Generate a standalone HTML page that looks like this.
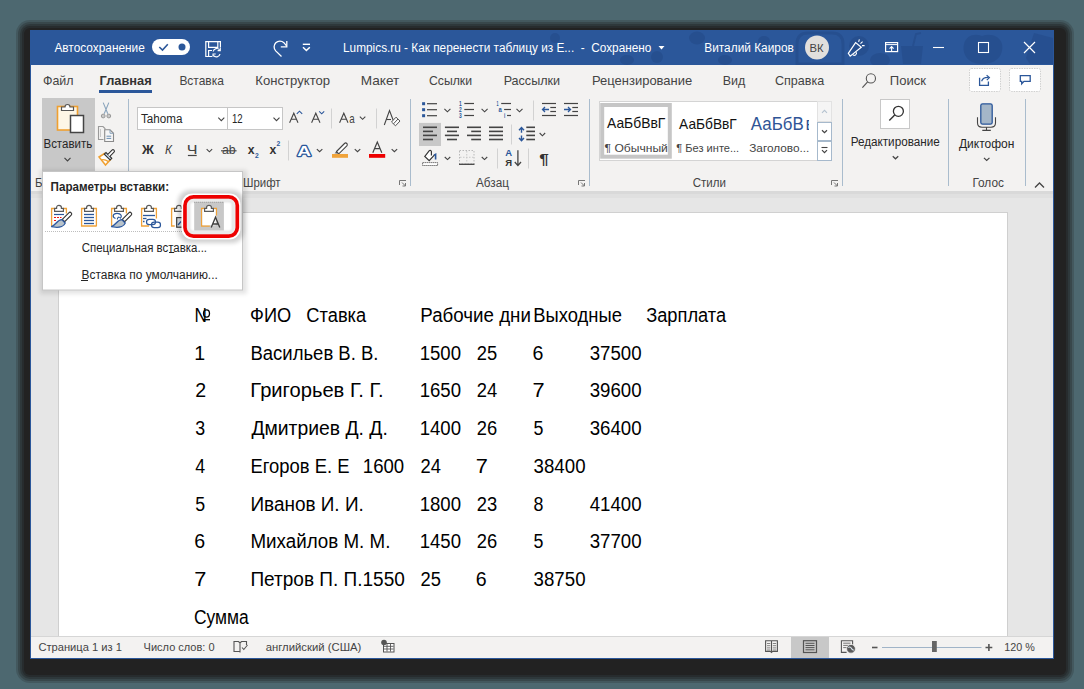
<!DOCTYPE html>
<html><head><meta charset="utf-8"><style>
html,body{margin:0;padding:0;width:1084px;height:689px;overflow:hidden;background:#4d6870}
svg{display:block;position:absolute;left:0;top:0}
text{font-family:"Liberation Sans", sans-serif;white-space:pre}
</style></head><body>
<svg width="1084" height="689" viewBox="0 0 1084 689">
<defs>
<filter id="blur4" x="-10%" y="-10%" width="120%" height="120%"><feGaussianBlur stdDeviation="4"/></filter>
<filter id="blur2" x="-10%" y="-10%" width="120%" height="120%"><feGaussianBlur stdDeviation="2"/></filter>
<filter id="blur1" x="-30%" y="-30%" width="160%" height="160%"><feGaussianBlur stdDeviation="1.2"/></filter>
</defs>
<g fill="#1e1e1e">
<rect x="16" y="20" width="1058" height="663" rx="14" opacity="0.22"/>
<rect x="18" y="22" width="1054" height="659" rx="12" opacity="0.28"/>
<rect x="20" y="24" width="1050" height="655" rx="10" opacity="0.34"/>
<rect x="22" y="26" width="1046" height="651" rx="8" opacity="0.45"/>
<rect x="24" y="28" width="1042" height="647" rx="6" fill="#222222"/>
</g>
<rect x="30" y="30" width="1024" height="629" fill="#2b579a" />
<rect x="31" y="65" width="1022" height="126" fill="#f3f2f1" />
<rect x="31" y="191" width="1022" height="446" fill="#e6e6e6" />
<rect x="31" y="191" width="1022" height="3" fill="#d9d9d9" />
<rect x="31" y="194" width="1022" height="4" fill="#e0e0e0" />
<rect x="58" y="212" width="950" height="425" fill="#ffffff" />
<line x1="58.5" y1="212" x2="58.5" y2="637" stroke="#cfcfcf" stroke-width="1" />
<line x1="1007.5" y1="212" x2="1007.5" y2="637" stroke="#cfcfcf" stroke-width="1" />
<line x1="58" y1="212.5" x2="1008" y2="212.5" stroke="#d0d0d0" stroke-width="1" />
<rect x="31" y="637" width="1022" height="21" fill="#f3f2f1" />
<line x1="31" y1="636.5" x2="1053" y2="636.5" stroke="#d6d6d6" stroke-width="1" />
<clipPath id="tb"><rect x="31" y="30" width="1022" height="35"/></clipPath>
<g fill="#254c8b" opacity="0.7" clip-path="url(#tb)">
<ellipse cx="697" cy="38" rx="8" ry="6.5"/>
<ellipse cx="764" cy="41" rx="6" ry="5"/>
<ellipse cx="725" cy="60" rx="7" ry="5"/>
<ellipse cx="657" cy="57" rx="6" ry="6"/>
<ellipse cx="555" cy="38" rx="5" ry="5"/>
<ellipse cx="627" cy="60" rx="7" ry="5"/>
<path d="M797,64 V44 Q797,33 808,33 H832 Q843,33 843,44 V64 Z" fill="none" stroke="#254c8b" stroke-width="3"/>
<path d="M903,64 L901,46 H923 L921,64 Z"/>
<path d="M913,46 L916,34 L921,33" fill="none" stroke="#254c8b" stroke-width="2"/>
<ellipse cx="880" cy="60" rx="10" ry="7"/>
<circle cx="859" cy="46" r="10"/>
<path d="M982,64 C966,64 962,52 964,44 C966,36 974,33 982,36 C990,33 1000,36 1002,44 C1004,54 998,64 982,64 Z"/>
<path d="M1026,58 L1034,33 L1053,38 V64 H1030 Z"/>
</g>
<text x="54.40" y="52" font-size="12.5" font-weight="400" fill="#ffffff" textLength="90.45" lengthAdjust="spacingAndGlyphs" >Автосохранение</text>
<rect x="152" y="39" width="38" height="16" rx="8" fill="#ffffff"/>
<path d="M159.3,47 L162.5,50 L167.8,44.3" stroke="#2b579a" fill="none" stroke-width="1.6" />
<circle cx="182" cy="46.9" r="3.5" fill="#2b579a"/>
<path d="M212,56.5 H205.8 V41.6 H220.4 V47.5 M208.6,41.6 V47.3 H217.8 V41.6 M208.6,56.5 V50.5 H212" stroke="#fff" fill="none" stroke-width="1.2" />
<path d="M213.2,51.5 A3.6,3.6 0 0 1 219.8,50.2 M220,54 A3.6,3.6 0 0 1 213.4,55.2" stroke="#fff" fill="none" stroke-width="1.2" />
<path d="M220.3,47.8 V50.6 H217.6 M213,56.8 V54 H215.7" stroke="#fff" fill="none" stroke-width="1.1" />
<path d="M281.5,56.5 L275.7,50.9 A5.8,5.8 0 0 1 283.9,42.7 L286.5,45.8" stroke="#fff" fill="none" stroke-width="1.3" />
<path d="M286.8,41 V46.8 H280.8" stroke="#fff" fill="none" stroke-width="1.3" />
<line x1="302.8" y1="44.3" x2="310" y2="44.3" stroke="#fff" stroke-width="1.4" />
<path d="M303,47.3 L306.4,50.5 L309.8,47.3" stroke="#fff" fill="none" stroke-width="1.5" />
<text x="343.05" y="52" font-size="12.5" font-weight="400" fill="#ffffff" textLength="308.40" lengthAdjust="spacingAndGlyphs" >Lumpics.ru - Как перенести таблицу из E...  -  Сохранено</text>
<path d="M658.5,46 L664.5,46 L661.5,49.5 Z" stroke="none" fill="#fff" stroke-width="1" />
<text x="704.25" y="52" font-size="12.5" font-weight="400" fill="#ffffff" textLength="89.61" lengthAdjust="spacingAndGlyphs" >Виталий Каиров</text>
<circle cx="817" cy="47.5" r="12" fill="#e1dfdd"/>
<text x="809.50" y="51.5" font-size="10.5" font-weight="400" fill="#444444" textLength="14.05" lengthAdjust="spacingAndGlyphs" >ВК</text>
<path d="M848.3,53.3 L855.6,42.6 L861.3,47.2 L850.2,56.2 Z" stroke="#fff" fill="none" stroke-width="1.2" />
<path d="M853,54.6 A1.8,1.8 0 0 0 856,52.2" stroke="#fff" fill="none" stroke-width="1.1" />
<path d="M858.6,41.8 L859.4,39.4 M860.5,43.6 L862.6,41.6 M862,45.6 H864.6" stroke="#fff" fill="none" stroke-width="1.1" />
<rect x="885.6" y="42.6" width="12" height="9" fill="none" stroke="#fff" stroke-width="1.2"/>
<line x1="885.6" y1="44.6" x2="897.6" y2="44.6" stroke="#fff" stroke-width="1" />
<path d="M891.6,51.2 V46.6 M889.6,48.6 L891.6,46.6 L893.6,48.6" stroke="#fff" fill="none" stroke-width="1.1" />
<line x1="933" y1="47.5" x2="944" y2="47.5" stroke="#fff" stroke-width="1.1" />
<rect x="978.5" y="42.5" width="10" height="10" fill="none" stroke="#fff" stroke-width="1.1"/>
<path d="M1024,42 L1035,53 M1035,42 L1024,53" stroke="#fff" fill="none" stroke-width="1.2" />
<text x="43.00" y="85" font-size="13" font-weight="400" fill="#444444" textLength="30.56" lengthAdjust="spacingAndGlyphs" >Файл</text>
<text x="99.60" y="85" font-size="13.6" font-weight="700" fill="#333333" textLength="52.08" lengthAdjust="spacingAndGlyphs" >Главная</text>
<rect x="99" y="90" width="53" height="3" fill="#2b579a" />
<text x="179.38" y="85" font-size="13" font-weight="400" fill="#444444" textLength="44.51" lengthAdjust="spacingAndGlyphs" >Вставка</text>
<text x="255.39" y="85" font-size="13" font-weight="400" fill="#444444" textLength="74.74" lengthAdjust="spacingAndGlyphs" >Конструктор</text>
<text x="360.75" y="85" font-size="13" font-weight="400" fill="#444444" textLength="38.60" lengthAdjust="spacingAndGlyphs" >Макет</text>
<text x="429.00" y="85" font-size="13" font-weight="400" fill="#444444" textLength="43.05" lengthAdjust="spacingAndGlyphs" >Ссылки</text>
<text x="503.63" y="85" font-size="13" font-weight="400" fill="#444444" textLength="56.42" lengthAdjust="spacingAndGlyphs" >Рассылки</text>
<text x="592.00" y="85" font-size="13" font-weight="400" fill="#444444" textLength="100.23" lengthAdjust="spacingAndGlyphs" >Рецензирование</text>
<text x="722.64" y="85" font-size="13" font-weight="400" fill="#444444" textLength="22.56" lengthAdjust="spacingAndGlyphs" >Вид</text>
<text x="775.00" y="85" font-size="13" font-weight="400" fill="#444444" textLength="49.26" lengthAdjust="spacingAndGlyphs" >Справка</text>
<circle cx="870.9" cy="78.4" r="4.6" fill="none" stroke="#555" stroke-width="1.1"/>
<line x1="867.6" y1="81.8" x2="862.4" y2="87.6" stroke="#555" stroke-width="1.2" />
<text x="889.80" y="85" font-size="13" font-weight="400" fill="#444444" textLength="36.19" lengthAdjust="spacingAndGlyphs" >Поиск</text>
<rect x="969.5" y="68.5" width="31" height="23" rx="2" fill="#ffffff" stroke="#cfcfcf" stroke-width="1" stroke-dasharray="1.5,1"/>
<rect x="1009.5" y="68.5" width="31" height="23" rx="2" fill="#ffffff" stroke="#cfcfcf" stroke-width="1" stroke-dasharray="1.5,1"/>
<path d="M979.6,77.8 V85.3 H988.4 V81.5" stroke="#2b579a" fill="none" stroke-width="1.3" />
<path d="M981.6,81.2 Q983,77.2 988.2,77.4 M986.6,75.2 L989.4,77.6 L986.8,80.2" stroke="#2b579a" fill="none" stroke-width="1.2" />
<path d="M1020.3,75.6 H1030.2 V81.3 H1024 L1021.7,83.8 V81.3 H1020.3 Z" stroke="#2b579a" fill="none" stroke-width="1.3" />
<line x1="128.5" y1="99" x2="128.5" y2="186" stroke="#a9bccd" stroke-width="1" />
<line x1="410.5" y1="99" x2="410.5" y2="186" stroke="#a9bccd" stroke-width="1" />
<line x1="589.5" y1="99" x2="589.5" y2="186" stroke="#a9bccd" stroke-width="1" />
<line x1="842.5" y1="99" x2="842.5" y2="186" stroke="#a9bccd" stroke-width="1" />
<line x1="948.5" y1="99" x2="948.5" y2="186" stroke="#a9bccd" stroke-width="1" />
<line x1="1025.5" y1="99" x2="1025.5" y2="186" stroke="#a9bccd" stroke-width="1" />
<text x="243.00" y="187" font-size="12" font-weight="400" fill="#444444" textLength="37.52" lengthAdjust="spacingAndGlyphs" >Шрифт</text>
<text x="476.00" y="187" font-size="12" font-weight="400" fill="#444444" textLength="32.88" lengthAdjust="spacingAndGlyphs" >Абзац</text>
<text x="692.70" y="187" font-size="12" font-weight="400" fill="#444444" textLength="33.17" lengthAdjust="spacingAndGlyphs" >Стили</text>
<text x="972.40" y="187" font-size="12" font-weight="400" fill="#444444" textLength="31.50" lengthAdjust="spacingAndGlyphs" >Голос</text>
<path d="M399.5,185 V180.5 H406 " stroke="#777" fill="none" stroke-width="1" />
<path d="M402,182.5 L405.5,186 M405.5,183 V186 H402.5" stroke="#777" fill="none" stroke-width="1" />
<path d="M578.5,185 V180.5 H585 " stroke="#777" fill="none" stroke-width="1" />
<path d="M581,182.5 L584.5,186 M584.5,183 V186 H581.5" stroke="#777" fill="none" stroke-width="1" />
<path d="M831.5,185 V180.5 H838 " stroke="#777" fill="none" stroke-width="1" />
<path d="M834,182.5 L837.5,186 M837.5,183 V186 H834.5" stroke="#777" fill="none" stroke-width="1" />
<path d="M1035,187.5 L1039.5,183 L1044,187.5" stroke="#444" fill="none" stroke-width="1.3" />
<text x="194.43" y="322" font-size="19.6" font-weight="400" fill="#000000" textLength="12.38" lengthAdjust="spacingAndGlyphs" >N</text>
<ellipse cx="206.5" cy="313.5" rx="3" ry="3.6" fill="none" stroke="#000" stroke-width="1.3"/>
<line x1="203" y1="319.7" x2="210" y2="319.7" stroke="#000" stroke-width="1.3" />
<text x="250.07" y="322" font-size="19.6" font-weight="400" fill="#000000" textLength="41.15" lengthAdjust="spacingAndGlyphs" >ФИО</text>
<text x="306.37" y="322" font-size="19.6" font-weight="400" fill="#000000" textLength="59.84" lengthAdjust="spacingAndGlyphs" >Ставка</text>
<text x="420.34" y="322" font-size="19.6" font-weight="400" fill="#000000" textLength="110.56" lengthAdjust="spacingAndGlyphs" >Рабочие дни</text>
<text x="533.36" y="322" font-size="19.6" font-weight="400" fill="#000000" textLength="88.54" lengthAdjust="spacingAndGlyphs" >Выходные</text>
<text x="646.20" y="322" font-size="19.6" font-weight="400" fill="#000000" textLength="79.90" lengthAdjust="spacingAndGlyphs" >Зарплата</text>
<text x="194.30" y="359.7" font-size="19.6" font-weight="400" fill="#000000" textLength="10.90" lengthAdjust="spacingAndGlyphs" >1</text>
<text x="250.46" y="359.7" font-size="19.6" font-weight="400" fill="#000000" textLength="128.01" lengthAdjust="spacingAndGlyphs" >Васильев В. В.</text>
<text x="419.65" y="359.7" font-size="19.6" font-weight="400" fill="#000000" textLength="41.37" lengthAdjust="spacingAndGlyphs" >1500</text>
<text x="476.80" y="359.7" font-size="19.6" font-weight="400" fill="#000000" textLength="20.41" lengthAdjust="spacingAndGlyphs" >25</text>
<text x="532.60" y="359.7" font-size="19.6" font-weight="400" fill="#000000" textLength="10.90" lengthAdjust="spacingAndGlyphs" >6</text>
<text x="589.70" y="359.7" font-size="19.6" font-weight="400" fill="#000000" textLength="51.93" lengthAdjust="spacingAndGlyphs" >37500</text>
<text x="195.30" y="397.4" font-size="19.6" font-weight="400" fill="#000000" textLength="10.90" lengthAdjust="spacingAndGlyphs" >2</text>
<text x="250.37" y="397.4" font-size="19.6" font-weight="400" fill="#000000" textLength="133.21" lengthAdjust="spacingAndGlyphs" >Григорьев Г. Г.</text>
<text x="419.65" y="397.4" font-size="19.6" font-weight="400" fill="#000000" textLength="41.37" lengthAdjust="spacingAndGlyphs" >1650</text>
<text x="476.80" y="397.4" font-size="19.6" font-weight="400" fill="#000000" textLength="20.41" lengthAdjust="spacingAndGlyphs" >24</text>
<text x="532.49" y="397.4" font-size="19.6" font-weight="400" fill="#000000" textLength="12.11" lengthAdjust="spacingAndGlyphs" >7</text>
<text x="589.70" y="397.4" font-size="19.6" font-weight="400" fill="#000000" textLength="51.93" lengthAdjust="spacingAndGlyphs" >39600</text>
<text x="195.30" y="435.1" font-size="19.6" font-weight="400" fill="#000000" textLength="9.91" lengthAdjust="spacingAndGlyphs" >3</text>
<text x="251.40" y="435.1" font-size="19.6" font-weight="400" fill="#000000" textLength="136.43" lengthAdjust="spacingAndGlyphs" >Дмитриев Д. Д.</text>
<text x="419.65" y="435.1" font-size="19.6" font-weight="400" fill="#000000" textLength="41.37" lengthAdjust="spacingAndGlyphs" >1400</text>
<text x="476.80" y="435.1" font-size="19.6" font-weight="400" fill="#000000" textLength="20.41" lengthAdjust="spacingAndGlyphs" >26</text>
<text x="533.60" y="435.1" font-size="19.6" font-weight="400" fill="#000000" textLength="9.91" lengthAdjust="spacingAndGlyphs" >5</text>
<text x="589.70" y="435.1" font-size="19.6" font-weight="400" fill="#000000" textLength="51.93" lengthAdjust="spacingAndGlyphs" >36400</text>
<text x="195.30" y="472.8" font-size="19.6" font-weight="400" fill="#000000" textLength="9.91" lengthAdjust="spacingAndGlyphs" >4</text>
<text x="250.46" y="472.8" font-size="19.6" font-weight="400" fill="#000000" textLength="99.00" lengthAdjust="spacingAndGlyphs" >Егоров Е. Е</text>
<text x="362.85" y="472.8" font-size="19.6" font-weight="400" fill="#000000" textLength="41.37" lengthAdjust="spacingAndGlyphs" >1600</text>
<text x="420.60" y="472.8" font-size="19.6" font-weight="400" fill="#000000" textLength="20.41" lengthAdjust="spacingAndGlyphs" >24</text>
<text x="475.69" y="472.8" font-size="19.6" font-weight="400" fill="#000000" textLength="12.11" lengthAdjust="spacingAndGlyphs" >7</text>
<text x="533.60" y="472.8" font-size="19.6" font-weight="400" fill="#000000" textLength="51.93" lengthAdjust="spacingAndGlyphs" >38400</text>
<text x="195.30" y="510.5" font-size="19.6" font-weight="400" fill="#000000" textLength="9.91" lengthAdjust="spacingAndGlyphs" >5</text>
<text x="250.43" y="510.5" font-size="19.6" font-weight="400" fill="#000000" textLength="113.36" lengthAdjust="spacingAndGlyphs" >Иванов И. И.</text>
<text x="419.65" y="510.5" font-size="19.6" font-weight="400" fill="#000000" textLength="41.37" lengthAdjust="spacingAndGlyphs" >1800</text>
<text x="476.80" y="510.5" font-size="19.6" font-weight="400" fill="#000000" textLength="20.41" lengthAdjust="spacingAndGlyphs" >23</text>
<text x="533.60" y="510.5" font-size="19.6" font-weight="400" fill="#000000" textLength="9.91" lengthAdjust="spacingAndGlyphs" >8</text>
<text x="589.70" y="510.5" font-size="19.6" font-weight="400" fill="#000000" textLength="51.93" lengthAdjust="spacingAndGlyphs" >41400</text>
<text x="194.30" y="548.2" font-size="19.6" font-weight="400" fill="#000000" textLength="10.90" lengthAdjust="spacingAndGlyphs" >6</text>
<text x="250.44" y="548.2" font-size="19.6" font-weight="400" fill="#000000" textLength="139.94" lengthAdjust="spacingAndGlyphs" >Михайлов М. М.</text>
<text x="419.65" y="548.2" font-size="19.6" font-weight="400" fill="#000000" textLength="41.37" lengthAdjust="spacingAndGlyphs" >1450</text>
<text x="476.80" y="548.2" font-size="19.6" font-weight="400" fill="#000000" textLength="20.41" lengthAdjust="spacingAndGlyphs" >26</text>
<text x="533.60" y="548.2" font-size="19.6" font-weight="400" fill="#000000" textLength="9.91" lengthAdjust="spacingAndGlyphs" >5</text>
<text x="589.70" y="548.2" font-size="19.6" font-weight="400" fill="#000000" textLength="51.93" lengthAdjust="spacingAndGlyphs" >37700</text>
<text x="194.19" y="585.9" font-size="19.6" font-weight="400" fill="#000000" textLength="12.11" lengthAdjust="spacingAndGlyphs" >7</text>
<text x="250.43" y="585.9" font-size="19.6" font-weight="400" fill="#000000" textLength="154.37" lengthAdjust="spacingAndGlyphs" >Петров П. П.1550</text>
<text x="420.60" y="585.9" font-size="19.6" font-weight="400" fill="#000000" textLength="20.41" lengthAdjust="spacingAndGlyphs" >25</text>
<text x="475.80" y="585.9" font-size="19.6" font-weight="400" fill="#000000" textLength="10.90" lengthAdjust="spacingAndGlyphs" >6</text>
<text x="533.60" y="585.9" font-size="19.6" font-weight="400" fill="#000000" textLength="51.93" lengthAdjust="spacingAndGlyphs" >38750</text>
<text x="193.91" y="623.6" font-size="19.6" font-weight="400" fill="#000000" textLength="54.80" lengthAdjust="spacingAndGlyphs" >Сумма</text>
<rect x="42" y="98" width="53" height="73" fill="#c8c8c8" />
<rect x="57.5" y="106.5" width="20" height="23.5" fill="#fdf6e6" stroke="#f0a030" stroke-width="1.6"/>
<path d="M61.5,110.5 V107 H65 A2.5,2.5 0 0 1 70,107 H73.5 V110.5 Z" stroke="#555" fill="#fff" stroke-width="1.2" />
<rect x="70.5" y="115.5" width="13" height="17" fill="#ffffff" stroke="#444" stroke-width="1.5"/>
<text x="43.48" y="148" font-size="12.5" font-weight="400" fill="#262626" textLength="48.69" lengthAdjust="spacingAndGlyphs" >Вставить</text>
<path d="M64.5,157.8 L67.5,160.8 L70.5,157.8" stroke="#444" fill="none" stroke-width="1.2" />
<path d="M103.2,102.6 L107.8,113.8 M108.8,102.6 L104.2,113.8" stroke="#8aa4bc" fill="none" stroke-width="1.1" />
<circle cx="103.2" cy="116" r="1.9" fill="#c8c8c8" stroke="#9a9a9a" stroke-width="1"/>
<circle cx="108.8" cy="116" r="1.9" fill="#c8c8c8" stroke="#9a9a9a" stroke-width="1"/>
<path d="M103.5,139.5 H98.5 V126.5 H103 L105,128.5 V129.5" stroke="#9a9a9a" fill="none" stroke-width="1.1" />
<path d="M100.5,129 V137 M100.5,131 H101 M100.5,134 H101" stroke="#c8c8c8" fill="none" stroke-width="1" />
<path d="M104.7,129.8 H110 L113.5,133.3 V141.5 H104.7 Z" stroke="#8a8a8a" fill="#f6f6f6" stroke-width="1.1" />
<path d="M110,129.8 V133.3 H113.5" stroke="#8aa4bc" fill="none" stroke-width="1" />
<path d="M106.5,136.2 H111.2 M106.5,138.4 H111.2" stroke="#6b8fb3" fill="none" stroke-width="1" />
<path d="M104.5,153.5 L99,157 L105.5,165 L110.5,159.5 Z" stroke="#f0a030" fill="#fff" stroke-width="1.5" />
<path d="M101.2,159.8 Q104.5,158.8 108.6,161.6" stroke="#f0a030" fill="none" stroke-width="1.3" />
<path d="M104.3,154.2 L106,152.5 L111.8,158.3 L110.1,160 Z" stroke="#333" fill="#cfe0f0" stroke-width="1.1" />
<path d="M107.6,154.6 L112,150.2 A1.4,1.4 0 0 1 114,152.2 L109.6,156.6" stroke="#333" fill="#fff" stroke-width="1.1" />
<text x="35.00" y="187" font-size="12" font-weight="400" fill="#444444" textLength="13.00" lengthAdjust="spacingAndGlyphs" >Бу</text>
<rect x="137.5" y="107.5" width="90" height="22" fill="#fff" stroke="#c6c6c6" stroke-width="1"/>
<rect x="227.5" y="107.5" width="55" height="22" fill="#fff" stroke="#c6c6c6" stroke-width="1"/>
<text x="141.00" y="123" font-size="12" font-weight="400" fill="#262626" textLength="41.38" lengthAdjust="spacingAndGlyphs" >Tahoma</text>
<path d="M218.3,117.7 L221.3,120.7 L224.3,117.7" stroke="#444" fill="none" stroke-width="1.1" />
<text x="232.00" y="123" font-size="12" font-weight="400" fill="#262626" textLength="10.74" lengthAdjust="spacingAndGlyphs" >12</text>
<path d="M273.5,117.7 L276.5,120.7 L279.5,117.7" stroke="#444" fill="none" stroke-width="1.1" />
<path d="M289.6,122.8 L293.8,113.2 L298,122.8 M291.2,119.3 H296.4" stroke="#444" fill="none" stroke-width="1.1" />
<path d="M296.8,113.8 L299.5,111.2 L302.2,113.8" stroke="#2b579a" fill="none" stroke-width="1.1" />
<path d="M311.6,122.8 L315.8,113.2 L320,122.8 M313.2,119.3 H318.4" stroke="#444" fill="none" stroke-width="1.1" />
<path d="M319.2,111.3 L321.7,113.8 L324.2,111.3" stroke="#2b579a" fill="none" stroke-width="1.1" />
<line x1="331.5" y1="108.5" x2="331.5" y2="128.5" stroke="#d2d2d2" stroke-width="1" />
<path d="M339.6,122.8 L343.8,113.2 L348,122.8 M341.2,119.3 H346.4" stroke="#444" fill="none" stroke-width="1.1" />
<text x="349.20" y="122.8" font-size="13" font-weight="400" fill="#444444" textLength="5.42" lengthAdjust="spacingAndGlyphs" >a</text>
<path d="M359.85,116.7 L362.6,119.3 L365.35,116.7" stroke="#444" fill="none" stroke-width="1.1" />
<line x1="376.5" y1="108.5" x2="376.5" y2="128.5" stroke="#d2d2d2" stroke-width="1" />
<path d="M384.3,125 L389.5,110.5 L393.5,121" stroke="#444" fill="none" stroke-width="1.1" />
<path d="M386.3,119.5 H391" stroke="#444" fill="none" stroke-width="1.1" />
<path d="M391.5,122 L396,117.2 L400,121 L395.5,125.8 Z" stroke="#555" fill="#fff" stroke-width="1" />
<path d="M393.5,123.8 L398,119" stroke="#555" fill="none" stroke-width="1" />
<text x="142.07" y="154" font-size="13.5" font-weight="700" fill="#333333" textLength="11.85" lengthAdjust="spacingAndGlyphs" >Ж</text>
<text x="165.00" y="154" font-size="13" font-weight="400" fill="#3c3c3c" font-style="italic" textLength="6.90" lengthAdjust="spacingAndGlyphs" >К</text>
<text x="186.76" y="154" font-size="13" font-weight="400" fill="#444444" textLength="10.77" lengthAdjust="spacingAndGlyphs" >Ч</text>
<line x1="187.9" y1="155.5" x2="196.7" y2="155.5" stroke="#444" stroke-width="1.2" />
<path d="M206.65,149.2 L209.4,151.8 L212.15,149.2" stroke="#444" fill="none" stroke-width="1.1" />
<text x="222.00" y="154" font-size="13" font-weight="400" fill="#444444" textLength="13.72" lengthAdjust="spacingAndGlyphs" >ab</text>
<line x1="221" y1="150.8" x2="236.6" y2="150.8" stroke="#444" stroke-width="1.1" />
<text x="247.70" y="154" font-size="13" font-weight="700" fill="#333333" textLength="6.78" lengthAdjust="spacingAndGlyphs" >x</text>
<text x="255.00" y="158" font-size="7.5" font-weight="700" fill="#2b579a" textLength="3.75" lengthAdjust="spacingAndGlyphs" >2</text>
<text x="269.50" y="154" font-size="13" font-weight="700" fill="#333333" textLength="6.78" lengthAdjust="spacingAndGlyphs" >x</text>
<text x="276.50" y="145.5" font-size="7.5" font-weight="700" fill="#2b579a" textLength="3.75" lengthAdjust="spacingAndGlyphs" >2</text>
<line x1="288.5" y1="140.5" x2="288.5" y2="160.5" stroke="#d2d2d2" stroke-width="1" />
<text x="297.30" y="155.8" font-size="15.5" font-weight="700" fill="#ffffff" textLength="13.84" lengthAdjust="spacingAndGlyphs" stroke="#2b579a" stroke-width="2.3" paint-order="stroke" stroke-linejoin="round">A</text>
<path d="M316.85,149.1 L319.6,151.70000000000002 L322.35,149.1" stroke="#444" fill="none" stroke-width="1.1" />
<path d="M336.5,151.5 L344.5,143.5 A1.5,1.5 0 0 1 346.8,145.8 L338.8,153.8 Z" stroke="#444" fill="#fff" stroke-width="1.1" />
<path d="M336.5,151.5 L334.5,153.2 L338.8,153.8 Z" stroke="none" fill="#555" stroke-width="1" />
<rect x="332" y="154" width="16" height="3.8" fill="#f0a33a" />
<path d="M354.75,149.1 L357.5,151.70000000000002 L360.25,149.1" stroke="#444" fill="none" stroke-width="1.1" />
<path d="M372.8,152.8 L377.3,142 L381.8,152.8 M374.6,148.6 H380" stroke="#444" fill="none" stroke-width="1.2" />
<rect x="369" y="154" width="16.2" height="3.8" fill="#ee0000" />
<path d="M391.65,149.1 L394.4,151.70000000000002 L397.15,149.1" stroke="#444" fill="none" stroke-width="1.1" />
<rect x="422.1" y="102.2" width="3" height="3" fill="#2b579a" />
<line x1="427" y1="103.7" x2="437" y2="103.7" stroke="#444444" stroke-width="1.2" />
<rect x="422.1" y="108.2" width="3" height="3" fill="#2b579a" />
<line x1="427" y1="109.7" x2="437" y2="109.7" stroke="#444444" stroke-width="1.2" />
<rect x="422.1" y="114.2" width="3" height="3" fill="#2b579a" />
<line x1="427" y1="115.7" x2="437" y2="115.7" stroke="#444444" stroke-width="1.2" />
<path d="M444.4,108.8 L447.4,111.8 L450.4,108.8" stroke="#444444" fill="none" stroke-width="1.1" />
<text x="459.00" y="106.1" font-size="6.5" font-weight="700" fill="#2b579a" textLength="2.71" lengthAdjust="spacingAndGlyphs" >1</text>
<line x1="464.3" y1="103.5" x2="474" y2="103.5" stroke="#444444" stroke-width="1.2" />
<text x="459.00" y="112.1" font-size="6.5" font-weight="700" fill="#2b579a" textLength="2.71" lengthAdjust="spacingAndGlyphs" >2</text>
<line x1="464.3" y1="109.5" x2="474" y2="109.5" stroke="#444444" stroke-width="1.2" />
<text x="459.00" y="118.1" font-size="6.5" font-weight="700" fill="#2b579a" textLength="2.71" lengthAdjust="spacingAndGlyphs" >3</text>
<line x1="464.3" y1="115.5" x2="474" y2="115.5" stroke="#444444" stroke-width="1.2" />
<path d="M481.6,108.8 L484.6,111.8 L487.6,108.8" stroke="#444444" fill="none" stroke-width="1.1" />
<text x="496.60" y="106.3" font-size="6.5" font-weight="700" fill="#2b579a" textLength="1.99" lengthAdjust="spacingAndGlyphs" >1</text>
<text x="498.60" y="112.2" font-size="7" font-weight="700" fill="#2b579a" textLength="3.31" lengthAdjust="spacingAndGlyphs" >a</text>
<text x="504.00" y="118" font-size="6.5" font-weight="700" fill="#2b579a" textLength="1.26" lengthAdjust="spacingAndGlyphs" >i</text>
<line x1="501.2" y1="103.5" x2="511" y2="103.5" stroke="#444444" stroke-width="1.2" />
<line x1="504.1" y1="109.5" x2="511" y2="109.5" stroke="#444444" stroke-width="1.2" />
<line x1="507" y1="115.5" x2="511" y2="115.5" stroke="#444444" stroke-width="1.2" />
<path d="M516.5,108.8 L519.5,111.8 L522.5,108.8" stroke="#444444" fill="none" stroke-width="1.1" />
<line x1="533.5" y1="100.5" x2="533.5" y2="120.5" stroke="#d2d2d2" stroke-width="1" />
<line x1="542" y1="103.5" x2="556" y2="103.5" stroke="#444444" stroke-width="1.2" />
<line x1="550.3" y1="107.5" x2="556" y2="107.5" stroke="#444444" stroke-width="1.2" />
<line x1="550.3" y1="111.5" x2="556" y2="111.5" stroke="#444444" stroke-width="1.2" />
<line x1="542" y1="115.5" x2="556" y2="115.5" stroke="#444444" stroke-width="1.2" />
<path d="M549,109.5 H542.5 M545,107 L542.5,109.5 L545,112" stroke="#2b579a" fill="none" stroke-width="1.3" />
<line x1="564" y1="103.5" x2="578" y2="103.5" stroke="#444444" stroke-width="1.2" />
<line x1="572.3" y1="107.5" x2="578" y2="107.5" stroke="#444444" stroke-width="1.2" />
<line x1="572.3" y1="111.5" x2="578" y2="111.5" stroke="#444444" stroke-width="1.2" />
<line x1="564" y1="115.5" x2="578" y2="115.5" stroke="#444444" stroke-width="1.2" />
<path d="M564,109.5 H570.5 M568,107 L570.5,109.5 L568,112" stroke="#2b579a" fill="none" stroke-width="1.3" />
<rect x="419" y="122.9" width="22" height="23.1" fill="#c8c8c8" />
<line x1="423" y1="127.3" x2="437" y2="127.3" stroke="#444444" stroke-width="1.6" />
<line x1="444.9" y1="127.3" x2="459" y2="127.3" stroke="#444444" stroke-width="1.6" />
<line x1="467" y1="127.3" x2="481" y2="127.3" stroke="#444444" stroke-width="1.6" />
<line x1="489" y1="127.3" x2="503" y2="127.3" stroke="#444444" stroke-width="1.6" />
<line x1="423" y1="131.4" x2="433" y2="131.4" stroke="#444444" stroke-width="1.6" />
<line x1="447" y1="131.4" x2="457" y2="131.4" stroke="#444444" stroke-width="1.6" />
<line x1="471.2" y1="131.4" x2="481" y2="131.4" stroke="#444444" stroke-width="1.6" />
<line x1="489" y1="131.4" x2="503" y2="131.4" stroke="#444444" stroke-width="1.6" />
<line x1="423" y1="135.4" x2="437" y2="135.4" stroke="#444444" stroke-width="1.6" />
<line x1="444.9" y1="135.4" x2="459" y2="135.4" stroke="#444444" stroke-width="1.6" />
<line x1="467" y1="135.4" x2="481" y2="135.4" stroke="#444444" stroke-width="1.6" />
<line x1="489" y1="135.4" x2="503" y2="135.4" stroke="#444444" stroke-width="1.6" />
<line x1="423" y1="139.5" x2="433" y2="139.5" stroke="#444444" stroke-width="1.6" />
<line x1="447" y1="139.5" x2="457" y2="139.5" stroke="#444444" stroke-width="1.6" />
<line x1="471.2" y1="139.5" x2="481" y2="139.5" stroke="#444444" stroke-width="1.6" />
<line x1="489" y1="139.5" x2="503" y2="139.5" stroke="#444444" stroke-width="1.6" />
<line x1="511.5" y1="124.5" x2="511.5" y2="144.5" stroke="#d2d2d2" stroke-width="1" />
<path d="M521.5,127.8 V132.8 M521.5,135.4 V140.4 M519,130.3 L521.5,127.6 L524,130.3 M519,137.9 L521.5,140.6 L524,137.9" stroke="#2b579a" fill="none" stroke-width="1.4" />
<line x1="526.3" y1="127.3" x2="535" y2="127.3" stroke="#444444" stroke-width="1.6" />
<line x1="526.3" y1="131.4" x2="535" y2="131.4" stroke="#444444" stroke-width="1.6" />
<line x1="526.3" y1="135.4" x2="535" y2="135.4" stroke="#444444" stroke-width="1.6" />
<line x1="526.3" y1="139.5" x2="535" y2="139.5" stroke="#444444" stroke-width="1.6" />
<path d="M539.65,133.0 L542.4,135.8 L545.15,133.0" stroke="#444444" fill="none" stroke-width="1.1" />
<path d="M431.4,155.6 V151.6 A1.3,1.3 0 0 0 429.3,150.6 L424.8,156.5 L429.2,160.7 L434.3,155.2" stroke="#333" fill="#fff" stroke-width="1.2" />
<path d="M434,155.2 L435.6,154.4 V159.4" stroke="#2b579a" fill="none" stroke-width="1.6" />
<rect x="422.6" y="162.6" width="15" height="2.9" fill="#fff" stroke="#444" stroke-width="0.9" stroke-dasharray="1.2,0.8"/>
<path d="M444.75,157.0 L447.5,159.60000000000002 L450.25,157.0" stroke="#444444" fill="none" stroke-width="1.1" />
<rect x="459.5" y="150.5" width="14.5" height="13.5" fill="none" stroke="#b9b9b9" stroke-width="1" stroke-dasharray="1.5,1.5"/>
<path d="M466.75,151 V163.5 M460,157.25 H473.5" stroke="#c8c8c8" fill="none" stroke-width="1" stroke-dasharray="1.5,1.5"/>
<line x1="459" y1="164.3" x2="474.5" y2="164.3" stroke="#444444" stroke-width="1.3" />
<path d="M481.75,157.0 L484.5,159.60000000000002 L487.25,157.0" stroke="#444444" fill="none" stroke-width="1.1" />
<line x1="497.5" y1="148.5" x2="497.5" y2="168.5" stroke="#d2d2d2" stroke-width="1" />
<text x="505.30" y="156.3" font-size="8.5" font-weight="700" fill="#2b579a" textLength="6.85" lengthAdjust="spacingAndGlyphs" >A</text>
<text x="505.30" y="165.8" font-size="8.5" font-weight="700" fill="#333333" textLength="6.82" lengthAdjust="spacingAndGlyphs" >Я</text>
<path d="M517.9,150.3 V165.3 M514.8,162 L517.9,165.6 L521,162" stroke="#444444" fill="none" stroke-width="1.3" />
<line x1="528.5" y1="148.5" x2="528.5" y2="168.5" stroke="#d2d2d2" stroke-width="1" />
<text x="539.20" y="163.7" font-size="14" font-weight="700" fill="#333333" textLength="9.54" lengthAdjust="spacingAndGlyphs" >¶</text>
<rect x="599.5" y="101.5" width="232" height="59" fill="#ffffff" stroke="#d4d4d4" stroke-width="1"/>
<rect x="602.2" y="105" width="67.6" height="51.7" fill="#ffffff" stroke="#c6c6c6" stroke-width="4"/>
<text x="607.00" y="128.4" font-size="15" font-weight="400" fill="#111111" textLength="58.31" lengthAdjust="spacingAndGlyphs" >АаБбВвГ</text>
<text x="604.60" y="151.8" font-size="11.5" font-weight="400" fill="#444444" textLength="63.25" lengthAdjust="spacingAndGlyphs" >¶ Обычный</text>
<text x="679.10" y="128.6" font-size="15" font-weight="400" fill="#111111" textLength="57.71" lengthAdjust="spacingAndGlyphs" >АаБбВвГ</text>
<text x="676.30" y="152" font-size="11.5" font-weight="400" fill="#444444" textLength="62.89" lengthAdjust="spacingAndGlyphs" >¶ Без инте...</text>
<text x="750.80" y="130" font-size="17.5" font-weight="400" fill="#2f5496" textLength="52.95" lengthAdjust="spacingAndGlyphs" font-weight="300">АаБбВ</text>
<clipPath id="st3"><rect x="800" y="110" width="9" height="25"/></clipPath>
<g clip-path="url(#st3)">
<text x="805.50" y="130" font-size="17.5" font-weight="400" fill="#2f5496" textLength="9.30" lengthAdjust="spacingAndGlyphs" >в</text>
</g>
<text x="749.20" y="152" font-size="11.5" font-weight="400" fill="#444444" textLength="60.20" lengthAdjust="spacingAndGlyphs" >Заголово...</text>
<rect x="817" y="101" width="15" height="60" fill="#f3f2f1" />
<rect x="817.5" y="101.5" width="14" height="20" fill="#f5f5f5" stroke="#e2e2e2" stroke-width="1"/>
<rect x="817.5" y="122.5" width="14" height="18" fill="#ffffff" stroke="#a6b9cc" stroke-width="1"/>
<rect x="817.5" y="141.5" width="14" height="19" fill="#ffffff" stroke="#a6b9cc" stroke-width="1"/>
<path d="M822,112.8 L824.5,110.3 L827,112.8" stroke="#b5c3d0" fill="none" stroke-width="1.1" />
<path d="M822.0,130.25 L824.5,132.75 L827.0,130.25" stroke="#444444" fill="none" stroke-width="1.2" />
<line x1="821.5" y1="147.5" x2="827.5" y2="147.5" stroke="#444444" stroke-width="1.1" />
<path d="M822.0,150.05 L824.5,152.55 L827.0,150.05" stroke="#444444" fill="none" stroke-width="1.2" />
<rect x="880.5" y="99.5" width="29" height="29" fill="#ffffff" stroke="#c8c8c8" stroke-width="1"/>
<circle cx="898.4" cy="111.3" r="5" fill="none" stroke="#333" stroke-width="1.3"/>
<line x1="894.7" y1="115" x2="889.3" y2="120.6" stroke="#333" stroke-width="1.4" />
<text x="850.66" y="145.5" font-size="12.5" font-weight="400" fill="#262626" textLength="89.09" lengthAdjust="spacingAndGlyphs" >Редактирование</text>
<path d="M892.75,156.2 L895.5,158.8 L898.25,156.2" stroke="#444444" fill="none" stroke-width="1.2" />
<rect x="980.8" y="103.8" width="11.4" height="20.4" rx="1.8" fill="#a4b6c8" stroke="#2b579a" stroke-width="1.3"/>
<path d="M977.5,117.2 V122.8 Q977.5,127.2 982,127.2 H991 Q995.5,127.2 995.5,122.8 V117.2" stroke="#444" fill="none" stroke-width="1.1" />
<path d="M986.5,127.2 V130.4 M982.3,130.4 H990.8" stroke="#444" fill="none" stroke-width="1.1" />
<text x="959.00" y="148" font-size="12.5" font-weight="400" fill="#262626" textLength="55.41" lengthAdjust="spacingAndGlyphs" >Диктофон</text>
<path d="M983.95,157.89999999999998 L986.7,160.5 L989.45,157.89999999999998" stroke="#444444" fill="none" stroke-width="1.2" />
<rect x="40" y="170" width="207" height="124" fill="#000" opacity="0.10" filter="url(#blur2)"/>
<rect x="42.5" y="171.5" width="200" height="118.5" fill="#ffffff" stroke="#c6c6c6" stroke-width="1"/>
<text x="50.60" y="191" font-size="12" font-weight="700" fill="#262626" textLength="118.46" lengthAdjust="spacingAndGlyphs" >Параметры вставки:</text>
<line x1="45" y1="231.5" x2="240" y2="231.5" stroke="#bdbdbd" stroke-width="1" stroke-dasharray="1,1"/>
<text x="81.70" y="251.5" font-size="12" font-weight="400" fill="#262626" textLength="125.32" lengthAdjust="spacingAndGlyphs" >Специальная вставка...</text>
<line x1="169" y1="252.5" x2="174.2" y2="252.5" stroke="#262626" stroke-width="1" />
<text x="81.50" y="279" font-size="12" font-weight="400" fill="#262626" textLength="136.33" lengthAdjust="spacingAndGlyphs" >Вставка по умолчанию...</text>
<line x1="81" y1="280.5" x2="88" y2="280.5" stroke="#262626" stroke-width="1" />
<path d="M54.5,208.5 H51.6 V226 H52" stroke="#f0a23a" fill="none" stroke-width="1.3" />
<path d="M63.5,208.5 H66.4 V213.5" stroke="#f0a23a" fill="none" stroke-width="1.3" />
<path d="M54.6,211.4 V208.4 H56.6 V207.4 A2.4,2.1 0 0 1 61.4,207.4 V208.4 H63.4 V211.4 Z" stroke="#5a5a5a" fill="#fff" stroke-width="1.2" />
<line x1="54" y1="214.5" x2="64" y2="214.5" stroke="#2b579a" stroke-width="1.2" />
<line x1="54" y1="217.5" x2="61.5" y2="217.5" stroke="#ee1111" stroke-width="1.2" stroke-dasharray="2,1"/>
<line x1="54" y1="220.5" x2="57" y2="220.5" stroke="#ee1111" stroke-width="1.2" stroke-dasharray="2,1"/>
<g transform="translate(0,0)">
<path d="M62.3,219.3 L68.8,212.8 A1.55,1.55 0 0 1 71.2,215.2 L64.7,221.7 Z" stroke="#333" fill="#fff" stroke-width="1.1" />
<path d="M61.8,219.6 L65.2,223 C64.2,226 60,227.6 55.5,227.2 L51.2,226.6 C53.2,225.9 54.8,224.6 56.2,223 C58,221 59.8,219.6 61.8,219.6 Z" stroke="#2f5aa0" fill="#b9c3ca" stroke-width="1.3" />
</g>
<path d="M84.5,208.5 H81.6 V226 H96.5" stroke="#f0a23a" fill="none" stroke-width="1.3" />
<path d="M93.5,208.5 H96.4 V226.3" stroke="#f0a23a" fill="none" stroke-width="1.3" />
<path d="M84.6,211.4 V208.4 H86.6 V207.4 A2.4,2.1 0 0 1 91.4,207.4 V208.4 H93.4 V211.4 Z" stroke="#5a5a5a" fill="#fff" stroke-width="1.2" />
<line x1="84" y1="214.5" x2="94" y2="214.5" stroke="#2b579a" stroke-width="1.3" />
<line x1="84" y1="217.5" x2="94" y2="217.5" stroke="#2b579a" stroke-width="1.3" />
<line x1="84" y1="220.5" x2="94" y2="220.5" stroke="#2b579a" stroke-width="1.3" />
<line x1="84" y1="223.5" x2="94" y2="223.5" stroke="#2b579a" stroke-width="1.3" />
<path d="M114.5,208.5 H111.6 V226 H112" stroke="#f0a23a" fill="none" stroke-width="1.3" />
<path d="M123.5,208.5 H126.4 V213.5" stroke="#f0a23a" fill="none" stroke-width="1.3" />
<path d="M114.6,211.4 V208.4 H116.6 V207.4 A2.4,2.1 0 0 1 121.4,207.4 V208.4 H123.4 V211.4 Z" stroke="#5a5a5a" fill="#fff" stroke-width="1.2" />
<path d="M115.5,218.5 C112,217 112.5,213.3 117,213.3 C121.5,213.3 122.5,216.5 120,218.5 M117.5,219.5 C117,217.5 119,216.5 119.5,217.8" stroke="#2b579a" fill="none" stroke-width="1.2" />
<g transform="translate(60,0)">
<path d="M62.3,219.3 L68.8,212.8 A1.55,1.55 0 0 1 71.2,215.2 L64.7,221.7 Z" stroke="#333" fill="#fff" stroke-width="1.1" />
<path d="M61.8,219.6 L65.2,223 C64.2,226 60,227.6 55.5,227.2 L51.2,226.6 C53.2,225.9 54.8,224.6 56.2,223 C58,221 59.8,219.6 61.8,219.6 Z" stroke="#2f5aa0" fill="#b9c3ca" stroke-width="1.3" />
</g>
<path d="M144.5,208.5 H141.6 V226 H149" stroke="#f0a23a" fill="none" stroke-width="1.3" />
<path d="M153.5,208.5 H156.4 V218.5" stroke="#f0a23a" fill="none" stroke-width="1.3" />
<path d="M144.6,211.4 V208.4 H146.6 V207.4 A2.4,2.1 0 0 1 151.4,207.4 V208.4 H153.4 V211.4 Z" stroke="#5a5a5a" fill="#fff" stroke-width="1.2" />
<line x1="143" y1="215.5" x2="155" y2="215.5" stroke="#2b579a" stroke-width="1.3" />
<line x1="143" y1="218.5" x2="146.5" y2="218.5" stroke="#2b579a" stroke-width="1.3" />
<line x1="143" y1="221.5" x2="144.5" y2="221.5" stroke="#2b579a" stroke-width="1.3" />
<rect x="146.5" y="219.3" width="9" height="5.4" rx="2.7" fill="none" stroke="#2b579a" stroke-width="1.2"/>
<rect x="151.5" y="222.2" width="9" height="5.4" rx="2.7" fill="none" stroke="#2b579a" stroke-width="1.2"/>
<path d="M174.5,208.5 H171.6 V226 H174.7" stroke="#f0a23a" fill="none" stroke-width="1.3" />
<path d="M174.6,211.4 V208.4 H176.6 V207.4 A2.4,2.1 0 0 1 181.4,207.4 V208.4 H183.4 V211.4 Z" stroke="#5a5a5a" fill="#fff" stroke-width="1.2" />
<rect x="176.7" y="217.6" width="13.6" height="9.6" fill="#dfe6ec" stroke="#3a3a3a" stroke-width="1.2"/>
<path d="M178,225 L181,221.5 M186,223 L188.5,226" stroke="#2b579a" fill="none" stroke-width="1.3" />
<rect x="178" y="190" width="66" height="53" rx="12" fill="#000" opacity="0.18" filter="url(#blur2)"/>
<rect x="181.5" y="193.5" width="59" height="46" rx="11" fill="#ffffff"/>
<rect x="185" y="196.9" width="52.3" height="39.2" rx="8.5" fill="#f4f4f4" stroke="#ee0000" stroke-width="3.7"/>
<rect x="188" y="200" width="46" height="33" rx="5" fill="#ffffff"/>
<rect x="189" y="201" width="44" height="31" rx="4" fill="none" stroke="#cfcfcf" stroke-width="1.6" filter="url(#blur1)"/>
<rect x="194.2" y="201.8" width="29.7" height="28.7" fill="#c8c8c8" />
<line x1="194.2" y1="202.3" x2="223.9" y2="202.3" stroke="#9a9a9a" stroke-width="1" stroke-dasharray="1,1"/>
<path d="M204,208.5 H201.6 V226 H209.8" stroke="#f0a23a" fill="none" stroke-width="1.3" />
<path d="M214,208.5 H216.4 V215.6" stroke="#f0a23a" fill="none" stroke-width="1.3" />
<rect x="202.3" y="209.2" width="13.4" height="16.1" fill="#ffffff" />
<path d="M204.6,211.4 V208.4 H206.6 V207.4 A2.4,2.1 0 0 1 211.4,207.4 V208.4 H213.4 V211.4 Z" stroke="#5a5a5a" fill="#fff" stroke-width="1.2" />
<path d="M211.2,227.6 L215.5,217.2 L219.8,227.6 M212.8,224 H218.2" stroke="#3c3c3c" fill="none" stroke-width="1.3" />
<text x="38.40" y="651" font-size="11.5" font-weight="400" fill="#444444" textLength="83.58" lengthAdjust="spacingAndGlyphs" >Страница 1 из 1</text>
<text x="143.60" y="651" font-size="11.5" font-weight="400" fill="#444444" textLength="70.98" lengthAdjust="spacingAndGlyphs" >Число слов: 0</text>
<path d="M240,651.5 L234,651.5 V641.5 H238.5 L240,643 L241.5,641.5 H246.5 V645 M240,643 V652.5" stroke="#555" fill="none" stroke-width="1.1" />
<path d="M242,647.5 L243.8,649.5 L247.5,645" stroke="#555" fill="none" stroke-width="1.1" />
<text x="265.70" y="651" font-size="11.5" font-weight="400" fill="#444444" textLength="95.63" lengthAdjust="spacingAndGlyphs" >английский (США)</text>
<rect x="383.5" y="643.5" width="10.5" height="8.5" fill="#fff" stroke="#555" stroke-width="1"/>
<path d="M384,646.3 H393.5 M384,649 H393.5 M387,644 V651.5 M390.5,644 V651.5" stroke="#555" fill="none" stroke-width="0.9" />
<circle cx="384" cy="642.5" r="2.8" fill="#555"/>
<path d="M765.6,640.8 H777.4 V651.4 H772.6 L771.5,652.5 L770.4,651.4 H765.6 Z M771.5,641 V652" stroke="#555" fill="none" stroke-width="1.1" />
<line x1="767" y1="643.5" x2="770.3" y2="643.5" stroke="#777" stroke-width="0.9" />
<line x1="772.8" y1="643.5" x2="776.2" y2="643.5" stroke="#777" stroke-width="0.9" />
<line x1="767" y1="645.7" x2="770.3" y2="645.7" stroke="#777" stroke-width="0.9" />
<line x1="772.8" y1="645.7" x2="776.2" y2="645.7" stroke="#777" stroke-width="0.9" />
<line x1="767" y1="647.9" x2="770.3" y2="647.9" stroke="#777" stroke-width="0.9" />
<line x1="772.8" y1="647.9" x2="776.2" y2="647.9" stroke="#777" stroke-width="0.9" />
<line x1="767" y1="650" x2="770.3" y2="650" stroke="#777" stroke-width="0.9" />
<line x1="772.8" y1="650" x2="776.2" y2="650" stroke="#777" stroke-width="0.9" />
<rect x="791" y="637" width="38" height="21" fill="#c8c8c8" />
<rect x="803.5" y="640.7" width="13" height="11.8" fill="none" stroke="#555" stroke-width="1.2"/>
<line x1="805.5" y1="643.3" x2="814.5" y2="643.3" stroke="#555" stroke-width="1" />
<line x1="805.5" y1="645.5" x2="814.5" y2="645.5" stroke="#555" stroke-width="1" />
<line x1="805.5" y1="647.6" x2="814.5" y2="647.6" stroke="#555" stroke-width="1" />
<line x1="805.5" y1="649.8" x2="814.5" y2="649.8" stroke="#555" stroke-width="1" />
<path d="M852.6,644.8 V640.8 H841.4 V652.4 H846.6" stroke="#555" fill="none" stroke-width="1.1" />
<line x1="843.2" y1="643.2" x2="850.5" y2="643.2" stroke="#666" stroke-width="0.9" />
<line x1="843.2" y1="645.4" x2="850.5" y2="645.4" stroke="#666" stroke-width="0.9" />
<line x1="843.2" y1="647.6" x2="850.5" y2="647.6" stroke="#666" stroke-width="0.9" />
<circle cx="851" cy="648.8" r="4.4" fill="#5a5a5a" stroke="#f3f2f1" stroke-width="0.8"/>
<path d="M848.3,647.5 Q850,646.2 851.2,648 Q852,649.8 853.8,650.2" stroke="#d8e4ee" fill="none" stroke-width="1.1" />
<line x1="872" y1="647.5" x2="877.5" y2="647.5" stroke="#555" stroke-width="1.6" />
<line x1="882" y1="647.5" x2="981.5" y2="647.5" stroke="#a0b4c8" stroke-width="1" />
<rect x="932" y="641" width="4.8" height="11" fill="#666666" />
<path d="M985.5,647.5 H992.3 M988.9,644 V651" stroke="#555" fill="none" stroke-width="1.6" />
<text x="1004.20" y="651" font-size="11.5" font-weight="400" fill="#444444" textLength="30.51" lengthAdjust="spacingAndGlyphs" >120 %</text>
</svg>
</body></html>
